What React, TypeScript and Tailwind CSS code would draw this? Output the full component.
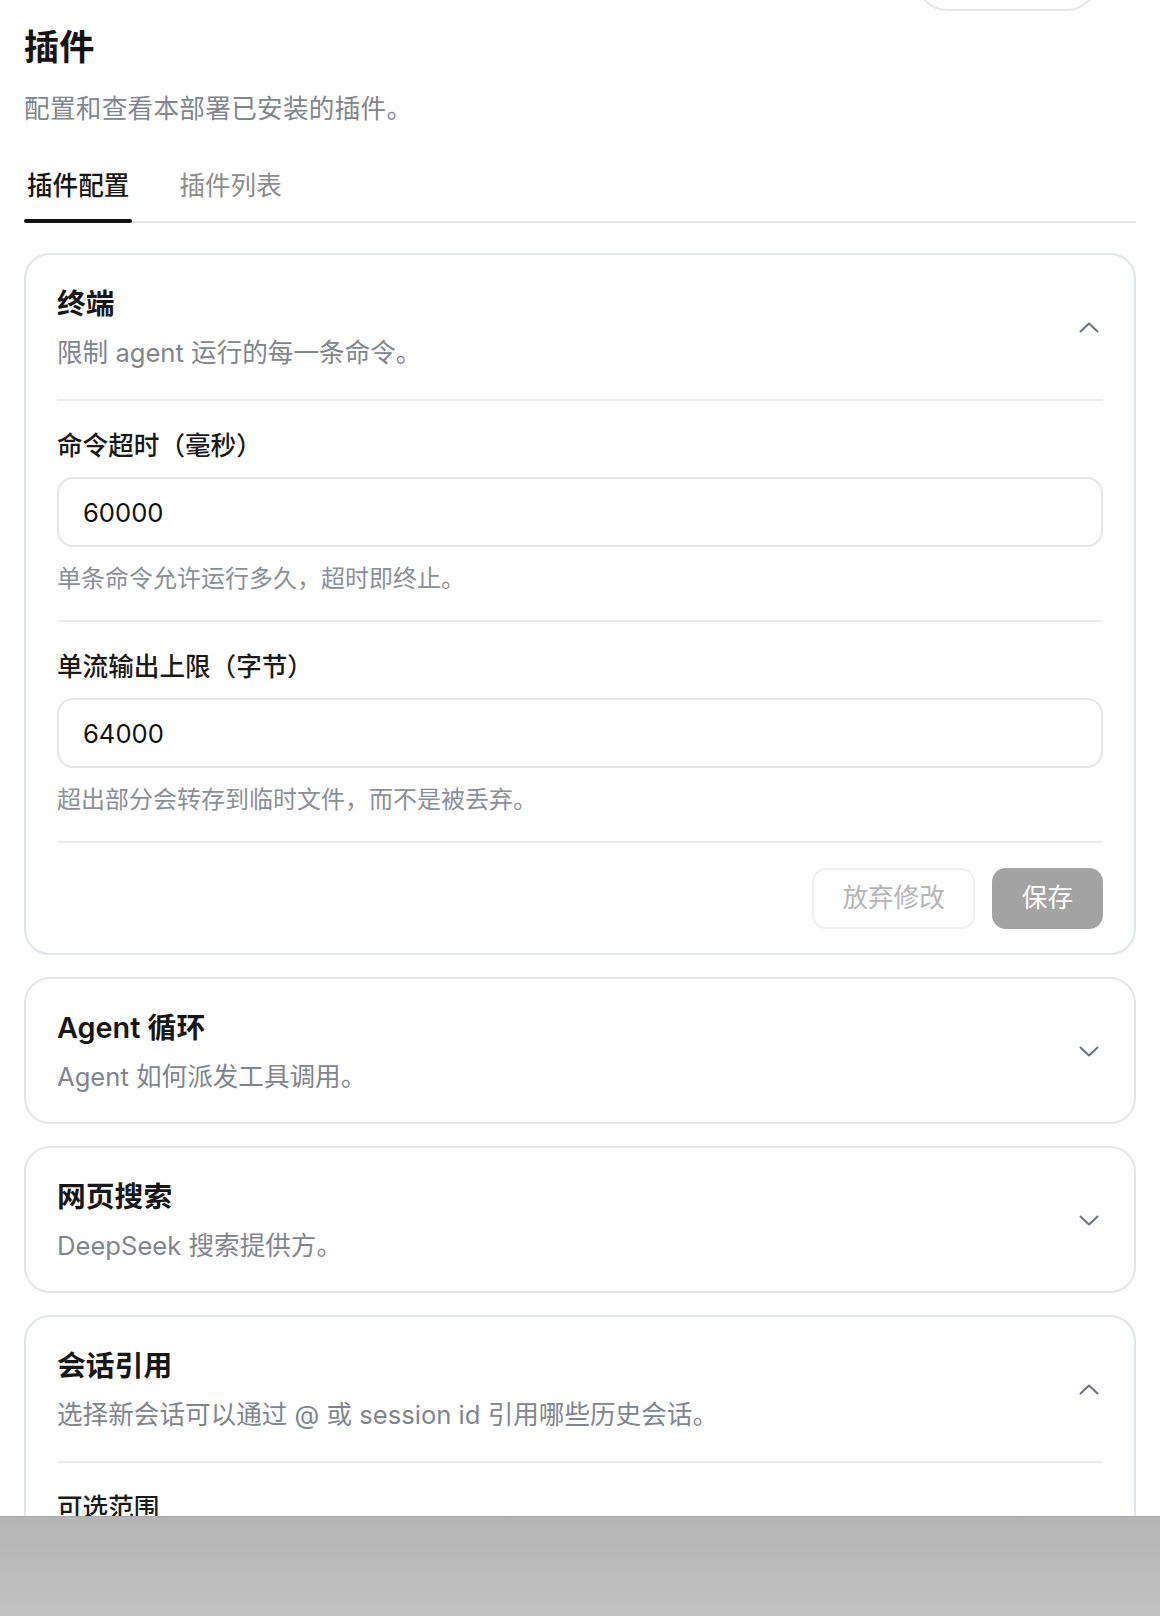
import React from "react";

function Chevron({ up }: { up: boolean }) {
  return (
    <div className="flex h-[28px] w-[28px] shrink-0 items-center justify-center">
      <svg width="20" height="11" viewBox="0 0 20 11" fill="none">
        <path
          d={up ? "M1.5 9.5L10 1.5L18.5 9.5" : "M1.5 1.5L10 9.5L18.5 1.5"}
          stroke="#6b7280"
          strokeWidth="2"
          strokeLinecap="round"
          strokeLinejoin="round"
        />
      </svg>
    </div>
  );
}

function Card({
  title,
  desc,
  open,
  children,
}: {
  title: string;
  desc: string;
  open: boolean;
  children?: React.ReactNode;
}) {
  return (
    <div
      className={
        open
          ? "rounded-[26px] border-2 border-[#e0e4ec] bg-white"
          : "rounded-[26px] border-2 border-[#e6e6e6] bg-white"
      }
    >
      <div
        className={
          open
            ? "flex items-center justify-between px-[31px] pt-[31px] pb-[30px]"
            : "flex items-center justify-between px-[31px] pt-[31px] pb-[29px]"
        }
      >
        <div>
          <div className="text-[28.8px] leading-[36px] font-semibold text-[#171717]">{title}</div>
          <div className="mt-[15px] text-[25.6px] leading-[32px] text-[#80858e]">{desc}</div>
        </div>
        <Chevron up={open} />
      </div>
      {open && <div className="px-[31px]">{children}</div>}
    </div>
  );
}

function Field({ label, value, help }: { label: string; value: string; help: string }) {
  return (
    <div className="border-t-2 border-[#ebebeb] pt-[28px] pb-[25px]">
      <div className="text-[25.6px] leading-[34px] font-medium text-[#1a1a1a]">{label}</div>
      <input
        readOnly
        value={value}
        className="mt-[14px] block h-[70px] w-full rounded-[16px] border-2 border-[#e6e6e6] bg-white px-[24px] text-[25.6px] text-[#111111] outline-none"
      />
      <div className="mt-[16px] text-[24px] leading-[32px] text-[#8a8f98]">{help}</div>
    </div>
  );
}

export default function App() {
  return (
    <div className="flex h-[1616px] w-[1160px] flex-col overflow-hidden bg-white font-[Inter,'Noto_Sans_CJK_SC',sans-serif]">
      <div className="h-[1516px] shrink-0 overflow-hidden px-[24px]">
        <div className="-mt-[49px] flex justify-end pr-[39px]">
          <div className="h-[60px] w-[180px] rounded-full border-2 border-[#e6e6e6] bg-white" />
        </div>
        <h1 className="mt-[14px] text-[35.2px] leading-[44px] font-bold text-[#141414]">插件</h1>
        <p className="mt-[22px] text-[25.6px] leading-[36px] tracking-[0.3px] text-[#80858e]">
          配置和查看本部署已安装的插件。
        </p>

        <div className="mt-[41px] flex gap-[44px] border-b-2 border-[#e6e6e6]">
          <div className="-mb-[2px] flex flex-col">
            <span className="px-[3px] text-[25.6px] leading-[36px] font-medium text-[#171717]">插件配置</span>
            <span className="mt-[15px] h-[4px] rounded-full bg-[#111111]" />
          </div>
          <div className="-mb-[2px] flex flex-col">
            <span className="px-[3px] text-[25.6px] leading-[36px] text-[#8c8c8c]">插件列表</span>
            <span className="mt-[15px] h-[4px]" />
          </div>
        </div>

        <div className="mt-[30px] flex flex-col gap-[22px]">
          <Card title="终端" desc="限制 agent 运行的每一条命令。" open>
            <Field label="命令超时（毫秒）" value="60000" help="单条命令允许运行多久，超时即终止。" />
            <Field label="单流输出上限（字节）" value="64000" help="超出部分会转存到临时文件，而不是被丢弃。" />
            <div className="flex justify-end gap-[17px] border-t-2 border-[#ebebeb] pt-[25px] pb-[24px]">
              <button className="h-[61px] rounded-[14px] border-2 border-[#f0f0f0] bg-white px-[28px] text-[25.6px] text-[#b5b5b5]">
                放弃修改
              </button>
              <button className="h-[61px] rounded-[14px] bg-[#a3a3a3] px-[30px] text-[25.6px] text-white">
                保存
              </button>
            </div>
          </Card>
          <Card title="Agent 循环" desc="Agent 如何派发工具调用。" open={false} />
          <Card title="网页搜索" desc="DeepSeek 搜索提供方。" open={false} />
          <Card title="会话引用" desc="选择新会话可以通过 @ 或 session id 引用哪些历史会话。" open>
            <div className="border-t-2 border-[#ebebeb] pt-[28px] pb-[25px]">
              <div className="text-[25.6px] leading-[34px] font-medium text-[#1a1a1a]">可选范围</div>
              <div className="mt-[14px] h-[70px] w-full rounded-[16px] border-2 border-[#e6e6e6]" />
            </div>
          </Card>
        </div>
      </div>
      <div className="h-[100px] shrink-0 border-t border-[#a9a9a9] bg-linear-to-b from-[#b4b4b4] to-[#c3c3c3]" />
    </div>
  );
}
